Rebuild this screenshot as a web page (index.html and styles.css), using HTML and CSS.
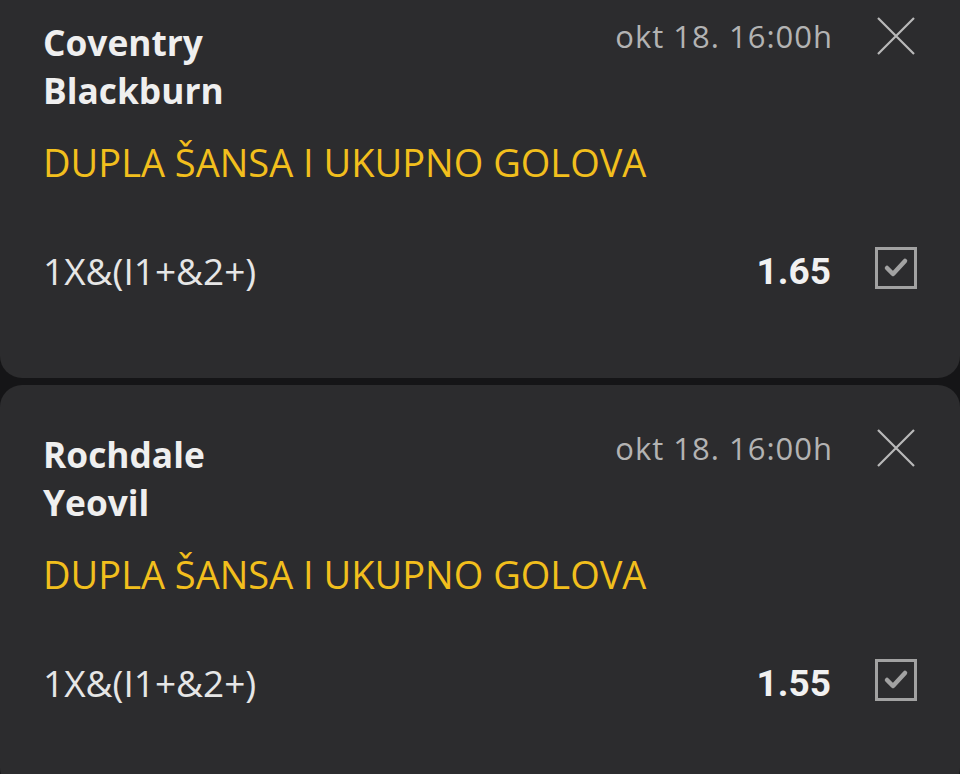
FILE: index.html
```html
<!DOCTYPE html>
<html lang="sr">
<head>
<meta charset="utf-8">
<title>Tiket</title>
<link rel="stylesheet" href="styles.css">
</head>
<body>
<div class="list">
  <div class="card">
    <div class="head">
      <div class="teams">
        <div class="team">Coventry</div>
        <div class="team">Blackburn</div>
      </div>
      <div class="meta">
        <span class="date">okt 18. 16:00h</span>
        <svg class="close" viewBox="0 0 40 40" width="40" height="40"><path d="M2 2 L38 38 M38 2 L2 38" stroke="#b9b9b9" stroke-width="2.2" fill="none"/></svg>
      </div>
    </div>
    <div class="market">DUPLA ŠANSA I UKUPNO GOLOVA</div>
    <div class="pick">
      <span class="sel">1X&amp;(I1+&amp;2+)</span>
      <span class="odd">1.65</span>
      <svg class="check" viewBox="0 0 42 42" width="42" height="42"><rect x="1.5" y="1.5" width="39" height="39" fill="none" stroke="#a2a2a2" stroke-width="3"/><path d="M12 21 L18 27 L30 14" stroke="#a2a2a2" stroke-width="4.5" fill="none" stroke-linecap="round" stroke-linejoin="round"/></svg>
    </div>
  </div>
  <div class="card">
    <div class="head">
      <div class="teams">
        <div class="team">Rochdale</div>
        <div class="team">Yeovil</div>
      </div>
      <div class="meta">
        <span class="date">okt 18. 16:00h</span>
        <svg class="close" viewBox="0 0 40 40" width="40" height="40"><path d="M2 2 L38 38 M38 2 L2 38" stroke="#b9b9b9" stroke-width="2.2" fill="none"/></svg>
      </div>
    </div>
    <div class="market">DUPLA ŠANSA I UKUPNO GOLOVA</div>
    <div class="pick">
      <span class="sel">1X&amp;(I1+&amp;2+)</span>
      <span class="odd">1.55</span>
      <svg class="check" viewBox="0 0 42 42" width="42" height="42"><rect x="1.5" y="1.5" width="39" height="39" fill="none" stroke="#a2a2a2" stroke-width="3"/><path d="M12 21 L18 27 L30 14" stroke="#a2a2a2" stroke-width="4.5" fill="none" stroke-linecap="round" stroke-linejoin="round"/></svg>
    </div>
  </div>
</div>
</body>
</html>
```
FILE: styles.css
```css
html, body {
  margin: 0;
  padding: 0;
  background: #151517;
  height: 100%;
  overflow: hidden;
}
body {
  font-family: "Open Sans", Roboto, sans-serif;
}
.list {
  display: flex;
  flex-direction: column;
  gap: 7px;
  margin-top: -27px;
}
.card {
  background: #2c2c2e;
  border-radius: 22px;
  padding: 45px 43px 82px 43px;
}
.head {
  display: flex;
  justify-content: space-between;
  align-items: flex-start;
}
.team {
  font-size: 35.3px;
  font-weight: 700;
  line-height: 48px;
  color: #efefef;
}
.meta {
  display: flex;
  align-items: flex-start;
  gap: 44px;
}
.date {
  font-size: 31px;
  letter-spacing: 1px;
  line-height: 36px;
  color: #b3b3b3;
  margin-top: 0;
  margin-right: -1px;
}
.close {
  margin-top: -2px;
  margin-right: 1px;
}
.market {
  margin-top: 24px;
  font-size: 38px;
  line-height: 48px;
  color: #f2bf1d;
}
.pick {
  margin-top: 54px;
  display: flex;
  align-items: center;
  height: 56px;
}
.sel {
  flex: 1;
  font-size: 37px;
  line-height: 48px;
  padding-top: 5px;
  color: #e6e6e6;
}
.odd {
  font-family: Roboto, sans-serif;
  font-size: 37px;
  font-weight: 700;
  line-height: 48px;
  padding-top: 7px;
  color: #f1f1f1;
  margin-right: 44px;
}
.check {
  display: block;
}
```
